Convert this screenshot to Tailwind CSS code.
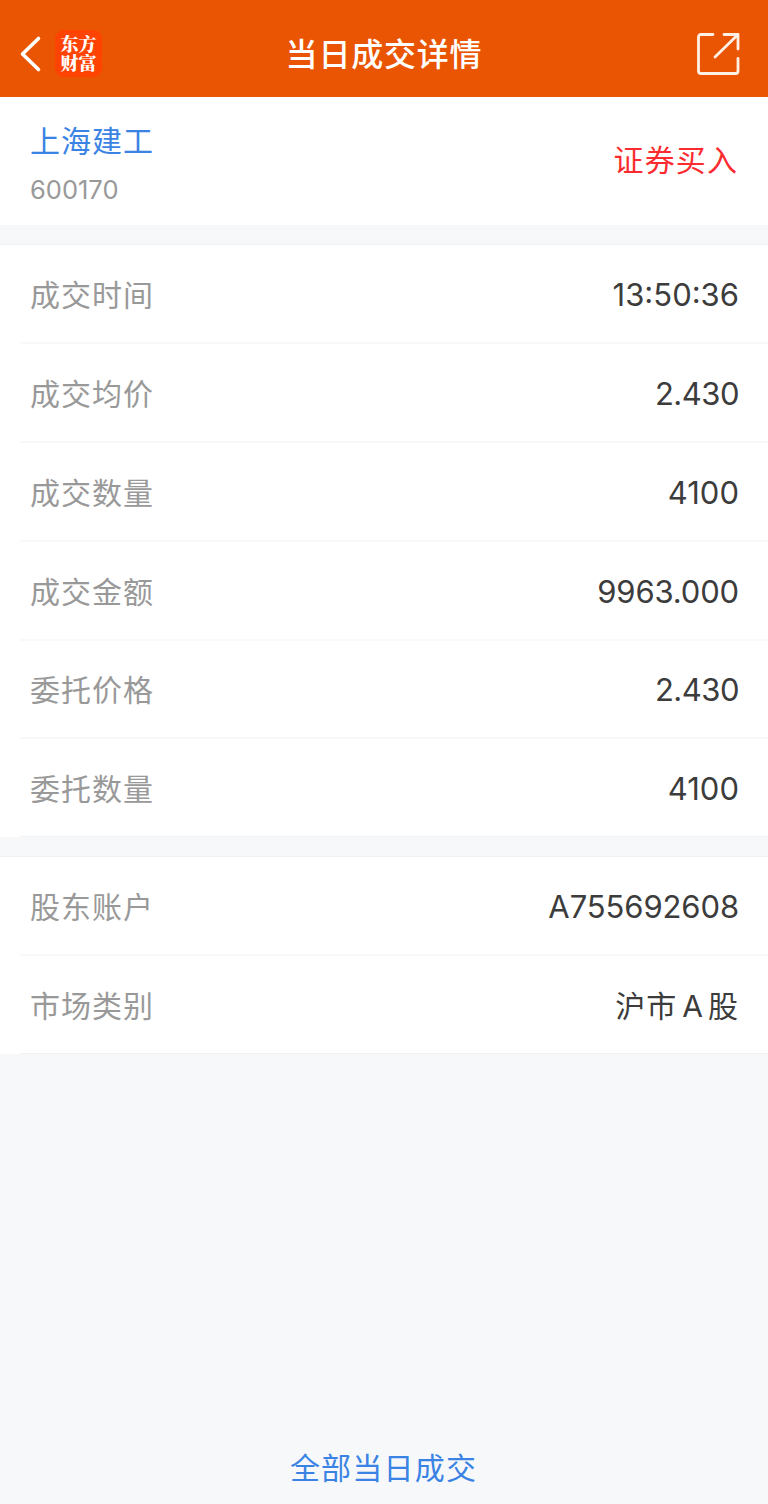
<!DOCTYPE html>
<html lang="zh-CN">
<head>
<meta charset="utf-8">
<title>当日成交详情</title>
<script src="https://cdn.jsdelivr.net/npm/@tailwindcss/browser@4"></script>
</head>
<body class="bg-[#f6f8fa]">
<div class="flex h-[1504px] w-[768px] flex-col bg-[#f6f8fa] font-['Inter','Noto_Sans_CJK_SC',sans-serif] text-[30px] leading-[44px] text-[#3c3c3c]">
  <header class="grid h-[97px] shrink-0 grid-cols-[1fr_auto_1fr] items-center bg-[#ea5504] pt-[10px] text-white">
    <div class="flex items-center pl-[19px]">
      <svg class="h-[38px] w-[24px]" viewBox="0 0 24 38" fill="none" stroke="currentColor" stroke-width="3.6" stroke-linecap="round" stroke-linejoin="round"><path d="M19.5 3.500 3.500 19l16 15.500"/></svg>
      <div class="ml-[12px] h-[47px] w-[47px] rounded-[9px] bg-[#ff4303] pt-[4px] text-center font-['Noto_Serif_CJK_SC','Noto_Sans_CJK_SC',serif] text-[18px] font-black leading-[19px]">东方<br>财富</div>
    </div>
    <h1 class="pb-[3px] font-['Noto_Sans_CJK_SC',sans-serif] text-[32px] font-medium tracking-[0.8px]">当日成交详情</h1>
    <svg class="mr-[28px] h-[44px] w-[44px] justify-self-end" viewBox="0 0 44 44" fill="none" stroke="#fff0e6" stroke-width="2.8" stroke-linejoin="round" stroke-linecap="round"><path d="M17 2.500H5Q2.500 2.500 2.500 5V39Q2.500 41.500 5 41.500H39.500Q42 41.500 42 39V26.500M28 2.500H42V17M42 2.500 19 25"/></svg>
  </header>

  <section class="flex h-[128px] shrink-0 items-center justify-between bg-white px-[30px]">
    <div class="pt-[6px]">
      <div class="tracking-[1px] text-[#3a83e4]">上海建工</div>
      <div class="mt-[7px] text-[25.500px] leading-[40px] text-[#999]">600170</div>
    </div>
    <div class="pb-[2px] tracking-[1.1px] text-[#fb2b2f]">证券买入</div>
  </section>

  <section class="mt-[19px] border-t border-[#f1f2f3] bg-white">
    <div class="ml-5 flex h-[99px] items-center justify-between border-b-2 border-[#f9f9fa] pl-[10px] pr-[30px] pt-[3px]"><span class="tracking-[1px] text-[#999]">成交时间</span><span class="-mr-px text-[31px]">13:50:36</span></div>
    <div class="ml-5 flex h-[99px] items-center justify-between border-b-2 border-[#f9f9fa] pl-[10px] pr-[30px] pt-[3px]"><span class="tracking-[1px] text-[#999]">成交均价</span><span class="-mr-px text-[31px] tracking-[-0.5px]">2.430</span></div>
    <div class="ml-5 flex h-[99px] items-center justify-between border-b-2 border-[#f9f9fa] pl-[10px] pr-[30px] pt-[2px]"><span class="tracking-[1px] text-[#999]">成交数量</span><span class="-mr-px text-[31px]">4100</span></div>
    <div class="ml-5 flex h-[99px] items-center justify-between border-b-2 border-[#f9f9fa] pl-[10px] pr-[30px] pt-[2px]"><span class="tracking-[1px] text-[#999]">成交金额</span><span class="-mr-px text-[31px] tracking-[-0.15px]">9963.000</span></div>
    <div class="ml-5 flex h-[98px] items-center justify-between border-b-2 border-[#f9f9fa] pl-[10px] pr-[30px] pt-[2px]"><span class="tracking-[1px] text-[#999]">委托价格</span><span class="-mr-px text-[31px] tracking-[-0.5px]">2.430</span></div>
    <div class="ml-5 flex h-[98px] items-center justify-between border-b border-[#f1f2f3] pl-[10px] pr-[30px] pt-[3px]"><span class="tracking-[1px] text-[#999]">委托数量</span><span class="-mr-px text-[31px]">4100</span></div>
  </section>

  <section class="mt-[19px] border-t border-[#f1f2f3] bg-white">
    <div class="ml-5 flex h-[99px] items-center justify-between border-b-2 border-[#f9f9fa] pl-[10px] pr-[30px] pt-[3px]"><span class="tracking-[1px] text-[#999]">股东账户</span><span class="-mr-px text-[31px] tracking-[-0.1px]">A755692608</span></div>
    <div class="ml-5 flex h-[98px] items-center justify-between border-b border-[#f1f2f3] pl-[10px] pr-[30px] pt-[2px]"><span class="tracking-[1px] text-[#999]">市场类别</span><span class="flex items-center"><span class="tracking-[1px]">沪市</span><span class="mx-[5px]">A</span><span>股</span></span></div>
  </section>

  <footer class="mt-auto pb-[14px] pr-px text-center tracking-[1.200px] text-[#3a83e4]">全部当日成交</footer>
</div>
</body>
</html>
